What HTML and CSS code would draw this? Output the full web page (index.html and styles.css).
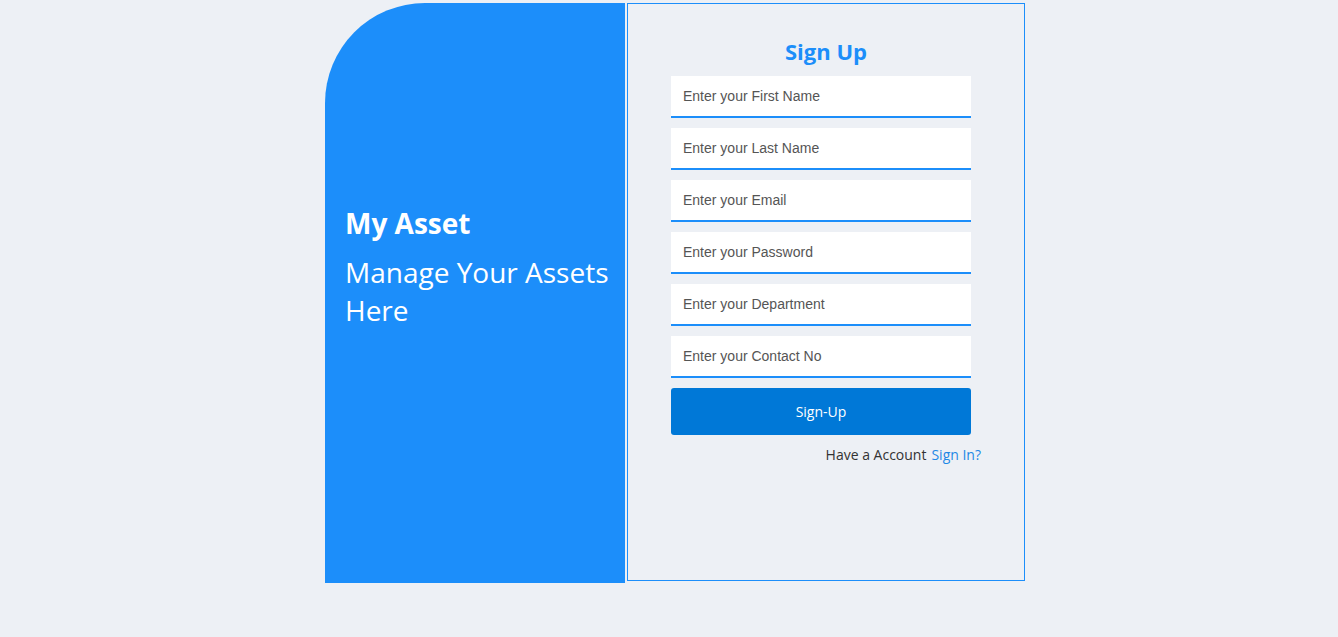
FILE: index.html
```html
<!DOCTYPE html>
<html>
<head>
<meta charset="utf-8">
<link rel="stylesheet" href="styles.css">
</head>
<body>
<div class="page">
  <div class="card">
    <div class="brand">
      <h1 class="brand-title">My Asset</h1>
      <p class="brand-sub">Manage Your Assets Here</p>
    </div>
    <div class="form-box">
      <h2 class="form-title">Sign Up</h2>
      <form class="form">
        <input class="field" type="text" placeholder="Enter your First Name">
        <input class="field" type="text" placeholder="Enter your Last Name">
        <input class="field" type="text" placeholder="Enter your Email">
        <input class="field" type="password" placeholder="Enter your Password">
        <input class="field" type="text" placeholder="Enter your Department">
        <input class="field" type="text" placeholder="Enter your Contact No">
        <button class="submit" type="button">Sign-Up</button>
        <div class="switch"><span class="switch-text">Have a Account</span><a class="switch-link" href="#">Sign In?</a></div>
      </form>
    </div>
  </div>
</div>
</body>
</html>
```
FILE: styles.css
```css
* { box-sizing: border-box; }
html, body { margin: 0; padding: 0; }
body {
  background: #edf0f5;
  font-family: "Open Sans", sans-serif;
  width: 1338px;
  height: 637px;
  overflow: hidden;
}
.page {
  display: flex;
  justify-content: center;
  padding: 3px 0 0 12px;
}
.card {
  display: flex;
  align-items: flex-start;
  gap: 2px;
}
.brand {
  width: 300px;
  height: 580px;
  background: #1c8efa;
  border-top-left-radius: 100px;
  color: #fff;
  padding: 200px 15px 0 20px;
}
.brand-title {
  margin: 0;
  font-size: 28px;
  font-weight: 700;
  line-height: 40px;
}
.brand-sub {
  margin: 10px 0 0;
  font-size: 28px;
  font-weight: 400;
  line-height: 38px;
}
.form-box {
  width: 398px;
  height: 578px;
  border: 1px solid #1c8efa;
  padding: 31px 0 0 43px;
}
.form-title {
  margin: 0 0 9px;
  width: 310px;
  text-align: center;
  font-size: 22px;
  font-weight: 700;
  color: #1c8efa;
  line-height: 32px;
}
.form {
  display: flex;
  flex-direction: column;
  gap: 10px;
  width: 300px;
}
.field {
  display: block;
  width: 300px;
  height: 42px;
  border: none;
  border-bottom: 2px solid #1c8efa;
  background: #fff;
  padding: 0 12px;
  font-family: "Liberation Sans", Arial, sans-serif;
  font-size: 14px;
  outline: none;
}
.field::placeholder { color: #555; }
.submit {
  height: 47px;
  width: 300px;
  border: none;
  border-radius: 3px;
  background: #0078d7;
  color: #fff;
  font-family: "Open Sans", sans-serif;
  font-size: 14px;
}
.switch {
  display: flex;
  justify-content: flex-end;
  gap: 5px;
  width: 310px;
  margin-top: 0;
  font-size: 14px;
  line-height: 20px;
}
.switch-text { color: #333; }
.switch-link { color: #1e88e5; text-decoration: none; }
```
